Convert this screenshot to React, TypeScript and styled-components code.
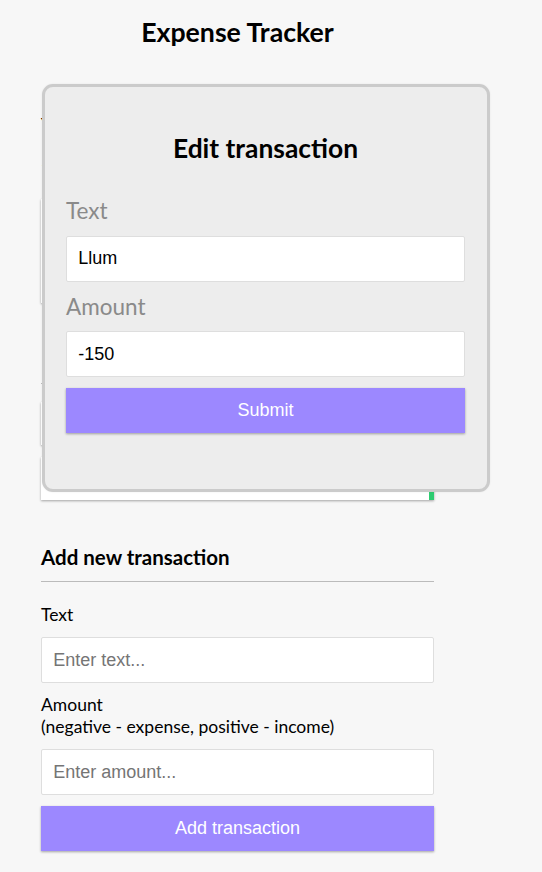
import React from "react";
import styled, { createGlobalStyle } from "styled-components";

const Global = createGlobalStyle`
  * { box-sizing: border-box; }
  body {
    margin: 0;
    background: #f7f7f7;
    font-family: Lato, "Open Sans", sans-serif;
    font-size: 17.5px;
    color: #000;
  }
`;

const shadow = "0 1px 3px rgba(0,0,0,0.12), 0 1px 2px rgba(0,0,0,0.24)";

const Page = styled.div`
  position: relative;
  padding: 16.4px 0 0 41px;
`;

const Column = styled.div`
  width: 393px;
`;

const Title = styled.h2`
  font-size: 26.7px;
  font-weight: 700;
  text-align: center;
  margin: 0 0 65px;
  line-height: normal;
`;

const BalanceLabel = styled.h4`
  margin: 0;
  font-size: 17.5px;
  text-transform: uppercase;
`;

const Balance = styled.h1`
  margin: 0;
  font-size: 35px;
  letter-spacing: 1px;
`;

const IncExp = styled.div`
  background: #fff;
  box-shadow: ${shadow};
  padding: 22.4px;
  display: flex;
  justify-content: space-between;
  margin: 22.4px 0;
`;

const IncExpHalf = styled.div`
  flex: 1;
  text-align: center;
  & + & { border-left: 1px solid #dedede; }
`;

const Money = styled.p<{ $plus?: boolean }>`
  font-size: 22px;
  letter-spacing: 1px;
  margin: 5.6px 0;
  color: ${(p) => (p.$plus ? "#2ecc71" : "#c0392b")};
`;

const SectionTitle = styled.h3`
  font-size: 20.5px;
  font-weight: 700;
  border-bottom: 1px solid #bbb;
  padding-bottom: 11.2px;
  margin: 45px 0 11.2px;
  line-height: normal;
`;

const List = styled.ul`
  list-style: none;
  padding: 0;
  margin: 18px 0 45.5px;
`;

const Item = styled.li<{ $plus?: boolean }>`
  background: #fff;
  box-shadow: ${shadow};
  color: #333;
  display: flex;
  justify-content: space-between;
  padding: 11.2px;
  margin: 11.2px 0;
  border-right: 5.6px solid ${(p) => (p.$plus ? "#2ecc71" : "#c0392b")};
`;

const FormControl = styled.div``;

const Label = styled.label`
  display: inline-block;
  margin: 11.2px 0;
  line-height: 21.8px;
`;

const Input = styled.input`
  display: block;
  width: 100%;
  border: 1px solid #dedede;
  border-radius: 2px;
  font-family: "Liberation Sans", Arial, sans-serif;
  font-size: 18px;
  padding: 11.6px 11.2px;
  background: #fff;
  color: #000;
  &::placeholder { color: #757575; }
`;

const Button = styled.button`
  display: block;
  width: 100%;
  cursor: pointer;
  background: #9c88ff;
  box-shadow: ${shadow};
  color: #fff;
  border: 0;
  font-family: "Liberation Sans", Arial, sans-serif;
  font-size: 18px;
  padding: 11.8px 11.2px;
  margin: 11.2px 0 33.7px;
`;

const Modal = styled.div`
  position: absolute;
  left: 42px;
  top: 84px;
  width: 448px;
  background: #ededed;
  border: 3px solid #cbcbcb;
  border-radius: 11px;
  padding: 22.4px 22px 22.4px 21px;
  box-shadow: 0 0 2px rgba(0, 0, 0, 0.08);
`;

const ModalTitle = styled.h2`
  font-size: 26.4px;
  font-weight: 700;
  text-align: center;
  margin: 22.4px 0;
  line-height: normal;
`;

const ModalLabel = styled(Label)`
  font-size: 22.5px;
  line-height: normal;
  color: #8a8a8a;
`;

export default function App() {
  return (
    <>
      <Global />
      <Page>
        <Column>
          <Title>Expense Tracker</Title>
          <BalanceLabel>Your Balance</BalanceLabel>
          <Balance>$1350.00</Balance>
          <IncExp>
            <IncExpHalf>
              <BalanceLabel>Income</BalanceLabel>
              <Money $plus>+$1500.00</Money>
            </IncExpHalf>
            <IncExpHalf>
              <BalanceLabel>Expense</BalanceLabel>
              <Money>-$150.00</Money>
            </IncExpHalf>
          </IncExp>
          <SectionTitle>History</SectionTitle>
          <List>
            <Item>
              Llum <span>-150</span>
            </Item>
            <Item $plus>
              Sou <span>+1500</span>
            </Item>
          </List>
          <SectionTitle>Add new transaction</SectionTitle>
          <form onSubmit={(e) => e.preventDefault()}>
            <FormControl>
              <Label htmlFor="text">Text</Label>
              <Input id="text" type="text" placeholder="Enter text..." />
            </FormControl>
            <FormControl>
              <Label htmlFor="amount">
                Amount <br />
                (negative - expense, positive - income)
              </Label>
              <Input id="amount" type="number" placeholder="Enter amount..." />
            </FormControl>
            <Button>Add transaction</Button>
          </form>
        </Column>
        <Modal>
          <ModalTitle>Edit transaction</ModalTitle>
          <FormControl>
            <ModalLabel htmlFor="etext">Text</ModalLabel>
            <Input id="etext" type="text" defaultValue="Llum" />
          </FormControl>
          <FormControl>
            <ModalLabel htmlFor="eamount">Amount</ModalLabel>
            <Input id="eamount" type="number" defaultValue="-150" />
          </FormControl>
          <Button>Submit</Button>
        </Modal>
      </Page>
    </>
  );
}
